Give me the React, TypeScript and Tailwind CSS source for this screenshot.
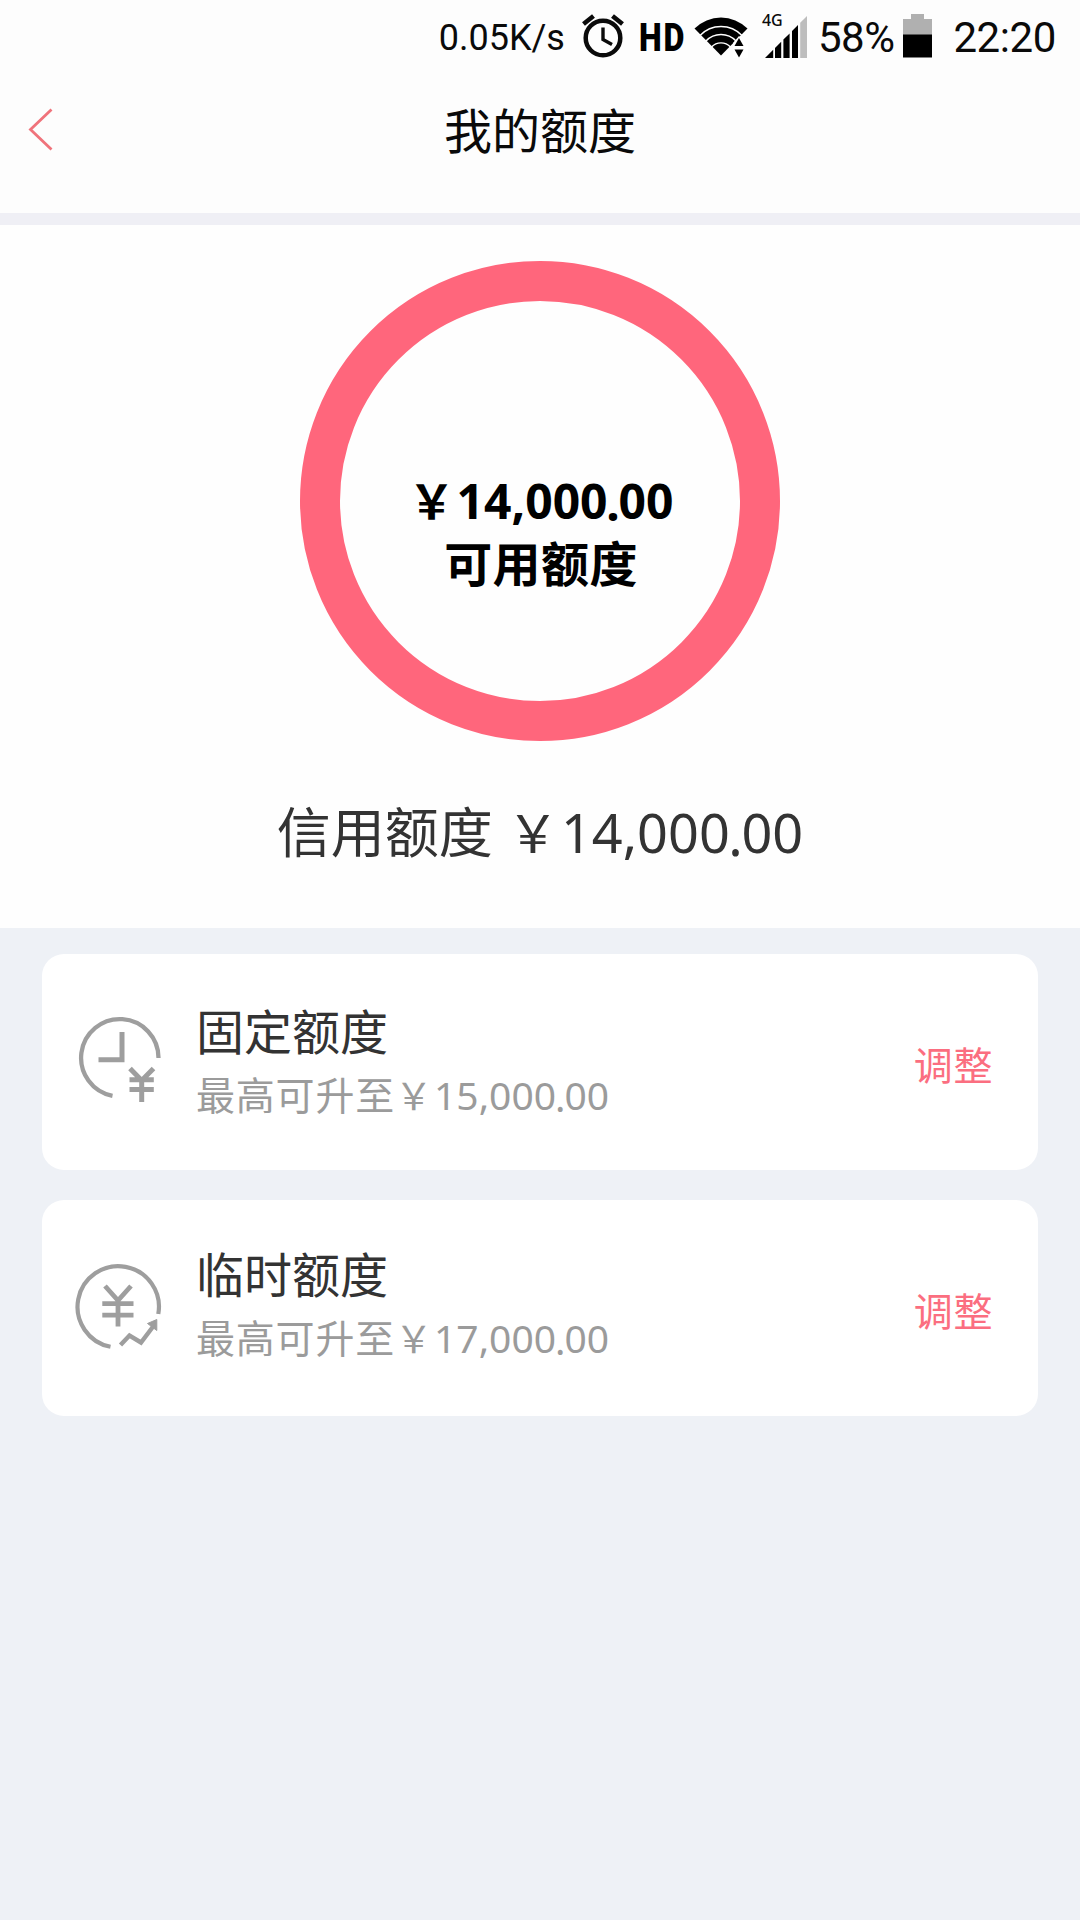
import type { ReactNode } from "react";

function AlarmIcon() {
  return (
    <svg width="44" height="46" viewBox="0 0 44 46" fill="none" stroke="#0a0a0a">
      <circle cx="22" cy="25" r="17.3" strokeWidth="4.5" />
      <path d="M22 14.5V26.5L31 31.5" strokeWidth="3.4" />
      <path d="M2.5 11L12.5 3M41.5 11L31.5 3" strokeWidth="4.6" />
    </svg>
  );
}

function WifiIcon() {
  return (
    <svg width="54" height="42" viewBox="0 0 54 42">
      <path d="M27 39.5L0.5 12.5A37.5 37.5 0 0 1 53.5 12.5Z" fill="#000" />
      <g fill="none" stroke="#fff" strokeWidth="1.4">
        <path d="M6 19.5A29 29 0 0 1 48 19.5" />
        <path d="M12 25A20.5 20.5 0 0 1 42 25" />
        <path d="M17.5 31A13 13 0 0 1 36.5 31" />
      </g>
      <path d="M39 31V27L45 20L54 29V42H39Z" fill="#fff" />
      <path d="M45 22L49.5 30H40.5ZM45 41.5L49.5 33.5H40.5Z" fill="#000" />
    </svg>
  );
}

function SignalIcon() {
  return (
    <svg width="43" height="42" viewBox="0 0 43 42">
      <path d="M0 42L8.2 33.8V42ZM10 32L16.2 25.8V42H10ZM18.4 23.6L24.6 17.4V42H18.4ZM27 15L33 9V42H27Z" fill="#000" />
      <path d="M35.2 6.8L42 0V42H35.2Z" fill="#bdbdbd" />
    </svg>
  );
}

function BatteryIcon() {
  return (
    <svg width="29" height="44" viewBox="0 0 29 44">
      <path d="M8 0H21V5H29V21H0V5H8Z" fill="#b0b0b0" />
      <path d="M0 20.5H29V43.5H0Z" fill="#000" />
    </svg>
  );
}

function FixedLimitIcon() {
  return (
    <svg width="88" height="96" viewBox="0 0 88 96" fill="none" stroke="#9e9e9e">
      <path d="M84.5 48A38.7 38.7 0 1 0 38.5 85.8" strokeWidth="4.3" />
      <path d="M48 22V49.8H24.5" strokeWidth="5" />
      <path d="M56 58.5L67.7 70.5L79.5 58.5M55.5 69.8H79.8M55.5 79.6H79.8M67.7 69V92" strokeWidth="5" />
    </svg>
  );
}

function TempLimitIcon() {
  return (
    <svg width="88" height="96" viewBox="0 0 88 96" fill="none" stroke="#9e9e9e">
      <path d="M84.3 52A40.7 40.7 0 1 0 36.5 84.8" strokeWidth="4.2" />
      <path d="M31 24L44 38.5L57 24M28.3 41.7H59.5M28.3 53.2H59.5M44 37V64.5" strokeWidth="4.8" />
      <path d="M46.5 83L55.5 73.5L67 80.5L79.5 64" strokeWidth="4.4" />
      <path d="M73.5 61.5L82.8 57.5V68.5Z" fill="#9e9e9e" />
    </svg>
  );
}

// Full-width yen sign, then the digits with a tight, slightly dropped decimal point
function Amount({ value }: { value: string }) {
  const [whole, cents] = value.split(".");
  return (
    <>
      <span className="inline-block w-[1em] leading-none">
        <span className="text-[0.96em] leading-none">￥</span>
      </span>
      {whole}
      <span className="mx-[-0.027em] align-[-0.05em] leading-none">.</span>
      {cents}
    </>
  );
}

type LimitCardProps = {
  icon: ReactNode;
  title: string;
  limit: string;
  iconClass: string;
  textClass: string;
};

function LimitCard({ icon, title, limit, iconClass, textClass }: LimitCardProps) {
  return (
    <div className="flex h-[216px] items-center rounded-[22px] bg-white pr-[45px] pl-[32px]">
      <div className={`w-[122px] shrink-0 ${iconClass}`}>{icon}</div>
      <div className={`flex-1 ${textClass}`}>
        <div className="text-[48px] leading-[64px] text-[#333]">{title}</div>
        <div className="text-[39px] leading-[62px] text-[#9b9b9b]">
          <span className="tracking-[0.8px]">最高可升至</span>
          <Amount value={limit} />
        </div>
      </div>
      <button className="pt-1.5 text-[39px] leading-[60px] tracking-[0.6px] text-[#fb6e80]">调整</button>
    </div>
  );
}

export default function App() {
  return (
    <div className="flex h-[1920px] w-[1080px] flex-col overflow-hidden bg-[#eef1f6] font-['Noto_Sans','Noto_Sans_CJK_SC',sans-serif]">
      <div className="flex h-[75px] items-center justify-end bg-[#fdfdfd] pr-[24px] font-['Roboto',sans-serif] text-[#0a0a0a]">
        <span className="text-[36px] leading-none">0.05K/s</span>
        <div className="ml-[16px] -mt-[4px]">
          <AlarmIcon />
        </div>
        <svg className="ml-[14px] -mt-[2px] overflow-visible" width="46" height="48" viewBox="0 0 46 48">
          <text x="0" y="37.5" fontSize="38" fontWeight="900" letterSpacing="2" textLength="47" lengthAdjust="spacingAndGlyphs" fill="#000">
            HD
          </text>
        </svg>
        <div className="ml-[9px] -mt-[1px]">
          <WifiIcon />
        </div>
        <div className="relative ml-[17px] -mt-[2px]">
          <SignalIcon />
          <span className="absolute -top-[4px] -left-[3px] font-['Noto_Sans',sans-serif] text-[16px] leading-[16px] font-medium">4G</span>
        </div>
        <span className="ml-[10px] text-[42px] leading-none tracking-[-0.5px]">58%</span>
        <div className="ml-[9px] -mt-[3px]">
          <BatteryIcon />
        </div>
        <span className="ml-[21px] text-[42px] leading-none tracking-[-0.4px]">22:20</span>
      </div>

      <header className="grid h-[138px] grid-cols-[120px_1fr_120px] items-start bg-[#fdfdfd] pt-[24px]">
        <svg className="mt-[8px] ml-[27px]" width="28" height="46" viewBox="0 0 28 46" fill="none">
          <path d="M24.5 2.5L3.5 22.5L24.5 42.5" stroke="#f0737b" strokeWidth="2.8" />
        </svg>
        <h1 className="text-center text-[48px] leading-[64px] text-[#0a0a0a]">我的额度</h1>
      </header>

      <div className="h-[12px] bg-[#efeff5]" />

      <section className="flex h-[703px] flex-col items-center bg-[#fefefe] pt-[36px]">
        <div className="flex size-[480px] flex-col items-center rounded-full border-[40px] border-[#ff667c] pt-[168px] text-[48px] leading-[63px] font-bold text-black">
          <div className="pl-[2px]">
            <Amount value="14,000.00" />
          </div>
          <div className="pl-[2px] tracking-[0.4px]">可用额度</div>
        </div>
        <div className="mt-[55px] text-[54px] leading-[72px] text-[#333]">
          信用额度 <Amount value="14,000.00" />
        </div>
      </section>

      <main className="flex flex-col gap-[30px] px-[42px] pt-[26px]">
        <LimitCard icon={<FixedLimitIcon />} title="固定额度" limit="15,000.00" iconClass="pb-[8px]" textClass="pt-[2px]" />
        <LimitCard icon={<TempLimitIcon />} title="临时额度" limit="17,000.00" iconClass="pt-[3px]" textClass="pb-[4px]" />
      </main>
    </div>
  );
}
